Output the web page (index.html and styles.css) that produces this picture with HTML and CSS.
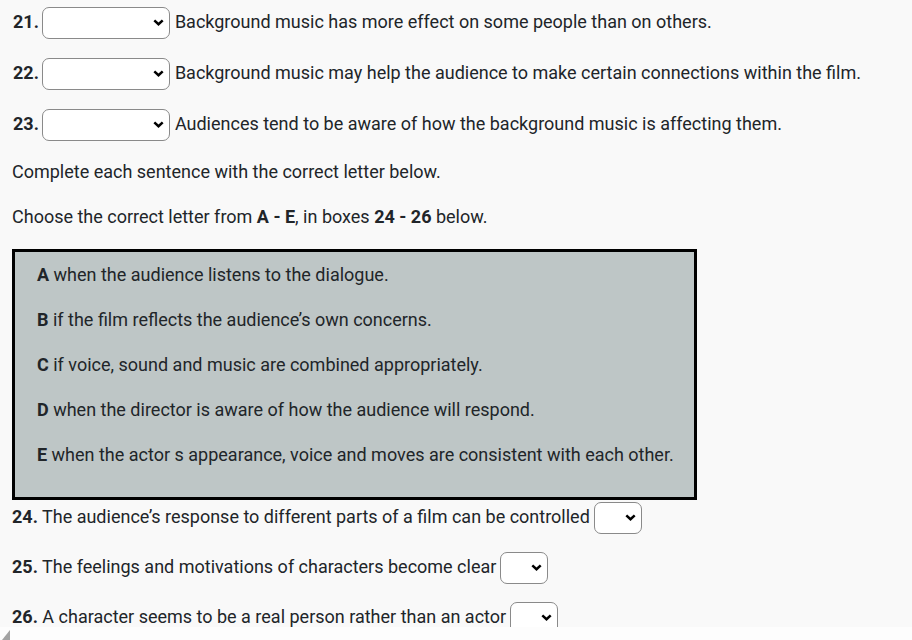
FILE: index.html
```html
<!DOCTYPE html>
<html lang="en">
<head>
<meta charset="utf-8">
<title>Questions</title>
<link rel="stylesheet" href="styles.css">
</head>
<body>
<div class="viewport">
  <div class="content">
    <div class="qrow">
      <b class="num">21.</b>
      <span class="sel wide"><select aria-label="21"><option></option></select><svg class="chev" width="11" height="7" viewBox="0 0 11 7"><path d="M1.3 1.3 L5.5 5.2 L9.7 1.3" fill="none" stroke="#000" stroke-width="2.5"/></svg></span>
      <span class="qtext">Background music has more effect on some people than on others.</span>
    </div>
    <div class="qrow">
      <b class="num">22.</b>
      <span class="sel wide"><select aria-label="22"><option></option></select><svg class="chev" width="11" height="7" viewBox="0 0 11 7"><path d="M1.3 1.3 L5.5 5.2 L9.7 1.3" fill="none" stroke="#000" stroke-width="2.5"/></svg></span>
      <span class="qtext">Background music may help the audience to make certain connections within the film.</span>
    </div>
    <div class="qrow">
      <b class="num">23.</b>
      <span class="sel wide"><select aria-label="23"><option></option></select><svg class="chev" width="11" height="7" viewBox="0 0 11 7"><path d="M1.3 1.3 L5.5 5.2 L9.7 1.3" fill="none" stroke="#000" stroke-width="2.5"/></svg></span>
      <span class="qtext">Audiences tend to be aware of how the background music is affecting them.</span>
    </div>

    <p class="instr first">Complete each sentence with the correct letter below.</p>
    <p class="instr">Choose the correct letter from <b>A - E</b>, in boxes <b>24 - 26</b> below.</p>

    <div class="options">
      <p><b>A</b> when the audience listens to the dialogue.</p>
      <p><b>B</b> if the film reflects the audience’s own concerns.</p>
      <p><b>C</b> if voice, sound and music are combined appropriately.</p>
      <p><b>D</b> when the director is aware of how the audience will respond.</p>
      <p><b>E</b> when the actor s appearance, voice and moves are consistent with each other.</p>
    </div>

    <div class="arow">
      <span><b>24.</b> The audience’s response to different parts of a film can be controlled</span>
      <span class="sel small"><select aria-label="24"><option></option></select><svg class="chev" width="11" height="7" viewBox="0 0 11 7"><path d="M1.3 1.3 L5.5 5.2 L9.7 1.3" fill="none" stroke="#000" stroke-width="2.5"/></svg></span>
    </div>
    <div class="arow">
      <span><b>25.</b> The feelings and motivations of characters become clear</span>
      <span class="sel small"><select aria-label="25"><option></option></select><svg class="chev" width="11" height="7" viewBox="0 0 11 7"><path d="M1.3 1.3 L5.5 5.2 L9.7 1.3" fill="none" stroke="#000" stroke-width="2.5"/></svg></span>
    </div>
    <div class="arow">
      <span><b>26.</b> A character seems to be a real person rather than an actor</span>
      <span class="sel small"><select aria-label="26"><option></option></select><svg class="chev" width="11" height="7" viewBox="0 0 11 7"><path d="M1.3 1.3 L5.5 5.2 L9.7 1.3" fill="none" stroke="#000" stroke-width="2.5"/></svg></span>
    </div>
  </div>
</div>
<div class="hscroll">
  <svg class="arrow" width="12" height="13" viewBox="0 0 12 13"><path d="M10 3 L10 13 L2 13 Z" fill="#a3a3a3"/></svg>
</div>
</body>
</html>
```
FILE: styles.css
```css
* { box-sizing: border-box; }
html, body {
  margin: 0;
  padding: 0;
  width: 912px;
  height: 640px;
  overflow: hidden;
  background: #f9f9f9;
}
body {
  font-family: Roboto, "Liberation Sans", Arial, sans-serif;
  font-size: 18px;
  color: #212529;
  display: flex;
  flex-direction: column;
}
.viewport {
  height: 627px;
  overflow: hidden;
  flex: none;
}
.content {
  padding: 7px 0 0 12px;
}
.qrow {
  display: flex;
  align-items: center;
  height: 31px;
  margin-bottom: 20px;
  line-height: 24px;
}
.qrow > .num, .qrow > .qtext { position: relative; top: -1px; }
.num {
  font-weight: 700;
  margin-left: 1px;
  margin-right: 3px;
}
.sel {
  position: relative;
  display: inline-flex;
  flex: none;
}
.sel select {
  appearance: none;
  -webkit-appearance: none;
  background: #fff;
  border: 1px solid #8a8a8a;
  border-radius: 7px;
  margin: 0;
  padding: 0;
  font: inherit;
  display: block;
}
.sel.wide select { width: 128px; height: 32px; }
.sel.small select { width: 48px; height: 32px; }
.chev {
  position: absolute;
  right: 6px;
  top: 12px;
  pointer-events: none;
}
.qtext {
  margin-left: 5px;
}
.instr {
  margin: 0;
  line-height: 24px;
}
.instr.first {
  margin-top: 0;
  margin-bottom: 21px;
}
.instr b { font-weight: 700; }
.options {
  margin-top: 20px;
  width: 685px;
  border: 3px solid #000;
  background: #bec6c6;
  padding: 11px 0 9px 22px;
}
.options p {
  margin: 0 0 21px 0;
  line-height: 24px;
}
.arow {
  display: flex;
  align-items: center;
  height: 32px;
  margin-top: 2px;
  margin-bottom: 18px;
  line-height: 24px;
}
.arow > span:first-child { position: relative; top: -1px; }
.arow .sel { margin-left: 4px; }
.hscroll {
  height: 13px;
  flex: none;
  background: #fdfdfd;
  position: relative;
}
.arrow {
  display: block;
}
```
